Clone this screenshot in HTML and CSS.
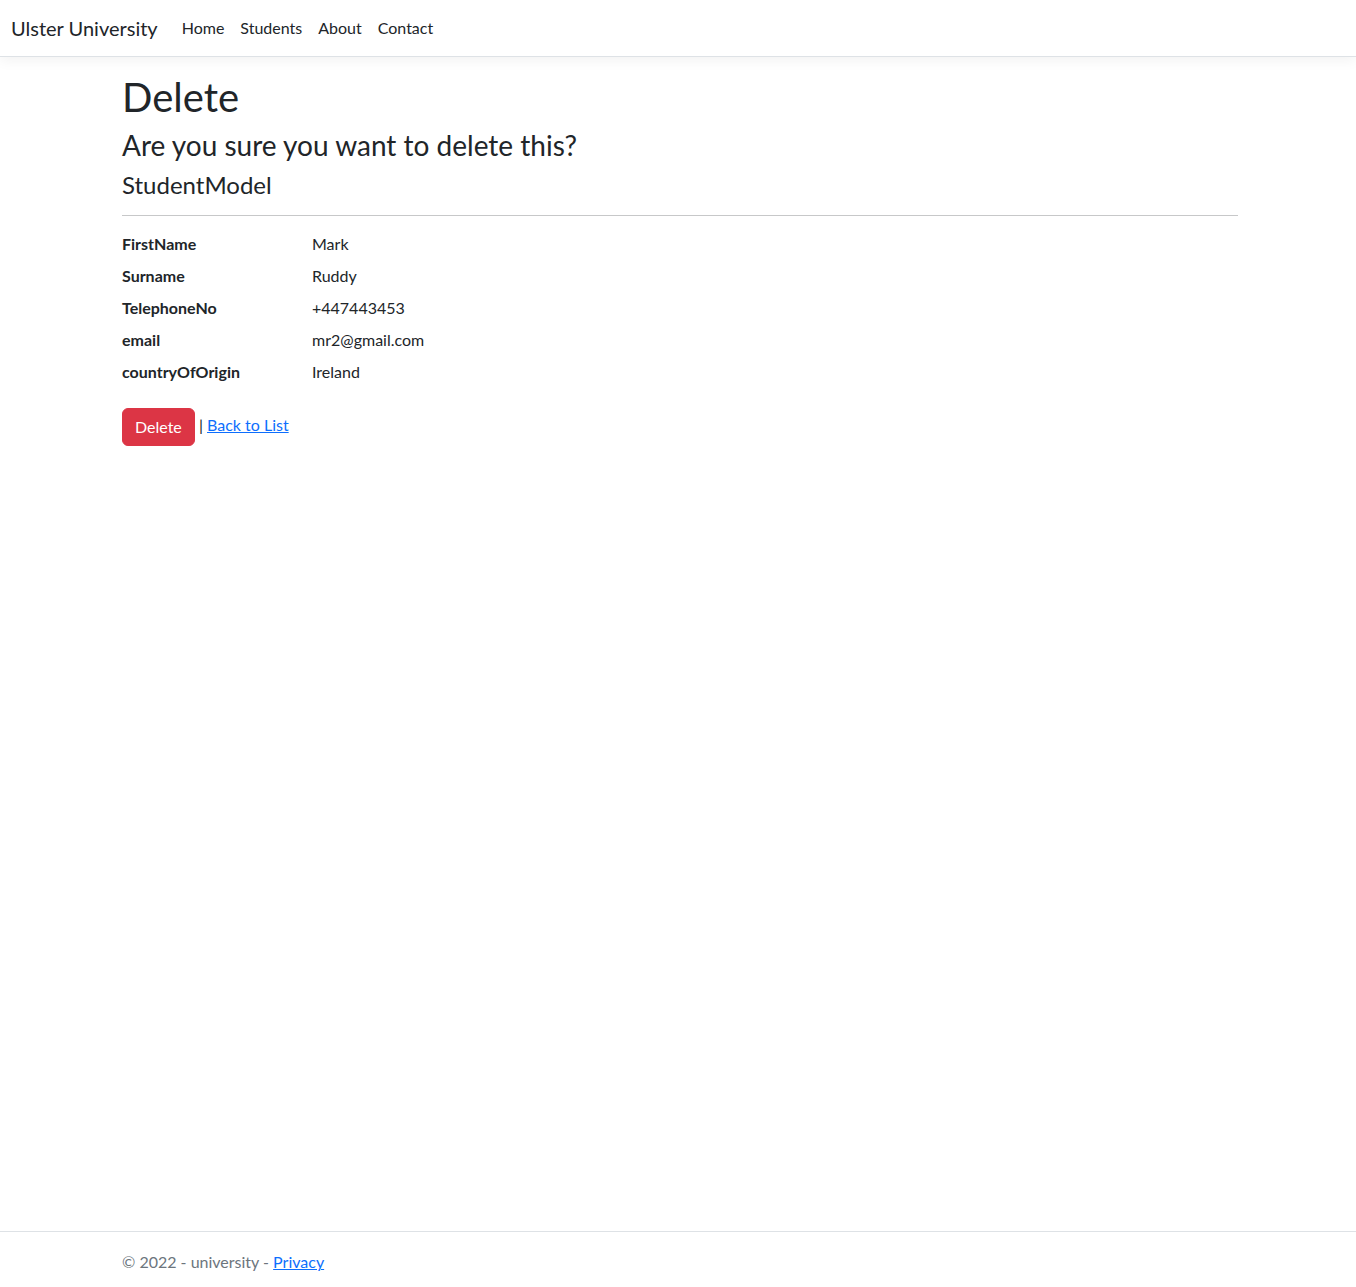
FILE: index.html
```html
<!DOCTYPE html>
<html lang="en">
<head>
<meta charset="utf-8">
<title>Delete - university</title>
<link rel="stylesheet" href="styles.css">
</head>
<body>
<div class="page">
  <header class="navbar">
    <a class="brand" href="#">Ulster University</a>
    <nav class="nav">
      <a class="nav-link" href="#">Home</a>
      <a class="nav-link" href="#">Students</a>
      <a class="nav-link" href="#">About</a>
      <a class="nav-link" href="#">Contact</a>
    </nav>
  </header>
  <main class="container">
    <h1 class="h1">Delete</h1>
    <h3 class="h3">Are you sure you want to delete this?</h3>
    <div>
      <h4 class="h4">StudentModel</h4>
      <hr class="rule">
      <dl class="details">
        <dt>FirstName</dt><dd>Mark</dd>
        <dt>Surname</dt><dd>Ruddy</dd>
        <dt>TelephoneNo</dt><dd>+447443453</dd>
        <dt>email</dt><dd>mr2@gmail.com</dd>
        <dt>countryOfOrigin</dt><dd>Ireland</dd>
      </dl>
      <form class="actions">
        <button type="button" class="btn-danger">Delete</button> | <a class="link" href="#">Back to List</a>
      </form>
    </div>
  </main>
  <footer class="footer">
    <div class="container footer-inner">&copy; 2022 - university - <a class="link" href="#">Privacy</a></div>
  </footer>
</div>
</body>
</html>
```
FILE: styles.css
```css
*,*::before,*::after{box-sizing:border-box}
html,body{margin:0;padding:0}
body{font-family:Lato,"Noto Sans",sans-serif;font-size:16px;line-height:1.5;color:#212529;background:#fff}
.page{min-height:calc(100vh + 5px);display:flex;flex-direction:column}
.navbar{display:flex;align-items:center;height:57px;padding:0 12px 0 11px;border-bottom:1px solid #dee2e6;box-shadow:0 4px 12px rgba(0,0,0,.05);margin-bottom:16px;background:#fff}
.brand{font-size:20px;line-height:30px;color:#212529;text-decoration:none;margin-right:16px;padding:5px 0;white-space:nowrap}
.nav{display:flex}
.nav-link{color:#212529;text-decoration:none;padding:8px 8px;line-height:24px}
.container{width:1144px;margin:0 auto;padding:0 12px 0 16px}
main.container{flex:1;padding-bottom:16px}
.h1,.h3,.h4{margin:0 0 8px;font-weight:500;line-height:1.2}
.h1{font-size:40px;font-weight:400}
.h3{font-size:28px;font-weight:400}
.h4{font-size:24px;font-weight:400}
.rule{margin:16px 0;border:0;border-top:1px solid #212529;opacity:.25}
.details{display:grid;grid-template-columns:190px 1fr;margin:0 0 16px}
.details dt{font-weight:700;margin:0 0 8px}
.details dd{margin:0 0 8px}
.actions{margin:0}
.btn-danger{font-family:inherit;font-size:16px;line-height:24px;padding:6px 12px;color:#fff;background:#dc3545;border:1px solid #dc3545;border-radius:6px;cursor:pointer;vertical-align:middle}
.link{color:#0d6efd;text-decoration:underline}
.footer{border-top:1px solid #dee2e6;line-height:60px;white-space:nowrap;color:#6c757d}
```
